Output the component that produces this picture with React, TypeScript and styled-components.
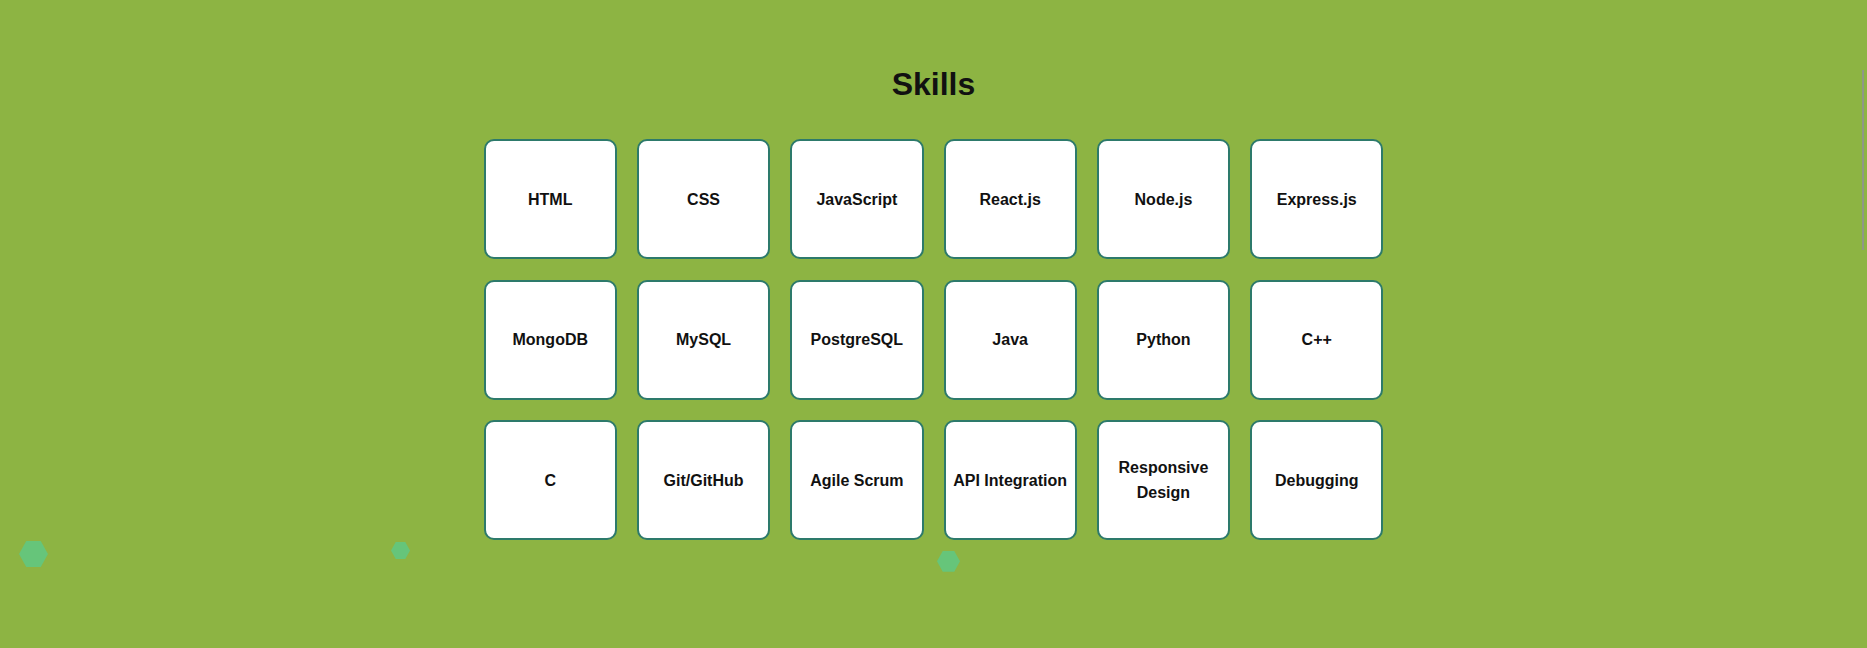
import styled, { createGlobalStyle } from "styled-components";

const skills = [
  "HTML",
  "CSS",
  "JavaScript",
  "React.js",
  "Node.js",
  "Express.js",
  "MongoDB",
  "MySQL",
  "PostgreSQL",
  "Java",
  "Python",
  "C++",
  "C",
  "Git/GitHub",
  "Agile Scrum",
  "API Integration",
  "Responsive Design",
  "Debugging",
];

const hexagons = [
  { left: 19, top: 541, size: 29 },
  { left: 391, top: 542, size: 19 },
  { left: 937, top: 551, size: 23 },
];

const GlobalStyle = createGlobalStyle`
  html, body {
    margin: 0;
    padding: 0;
    background: #8db443;
    font-family: "Liberation Sans", Arial, sans-serif;
  }
`;

const Section = styled.section`
  position: relative;
  width: 100%;
  height: 648px;
  background: #8db443;
  overflow: hidden;
  padding-top: 66px;
  box-sizing: border-box;
`;

const Title = styled.h2`
  margin: 0 0 36px;
  text-align: center;
  font-size: 32px;
  line-height: 37px;
  font-weight: 700;
  color: #111;
`;

const Grid = styled.div`
  display: grid;
  grid-template-columns: repeat(6, 133.3px);
  grid-auto-rows: 120px;
  gap: 20.5px 20px;
  justify-content: center;
`;

const Card = styled.div`
  display: flex;
  align-items: center;
  justify-content: center;
  box-sizing: border-box;
  padding: 6px;
  background: #fff;
  border: 2px solid #2d7a6b;
  border-radius: 10px;
  text-align: center;
  font-size: 16px;
  line-height: 25px;
  font-weight: 700;
  color: #111;
`;

const Hexagon = styled.div<{ $size: number }>`
  position: absolute;
  width: ${(p) => p.$size}px;
  height: ${(p) => p.$size * 0.9}px;
  background: #66c57a;
  clip-path: polygon(25% 0, 75% 0, 100% 50%, 75% 100%, 25% 100%, 0 50%);
`;

const ScrollLine = styled.div`
  position: absolute;
  right: 3px;
  top: 70px;
  width: 2px;
  height: 180px;
  background: #8f9788;
`;

export default function App() {
  return (
    <>
      <GlobalStyle />
      <Section>
        <Title>Skills</Title>
        <Grid>
          {skills.map((s) => (
            <Card key={s}>{s}</Card>
          ))}
        </Grid>
        {hexagons.map((h, i) => (
          <Hexagon key={i} $size={h.size} style={{ left: h.left, top: h.top }} />
        ))}
        <ScrollLine />
      </Section>
    </>
  );
}
